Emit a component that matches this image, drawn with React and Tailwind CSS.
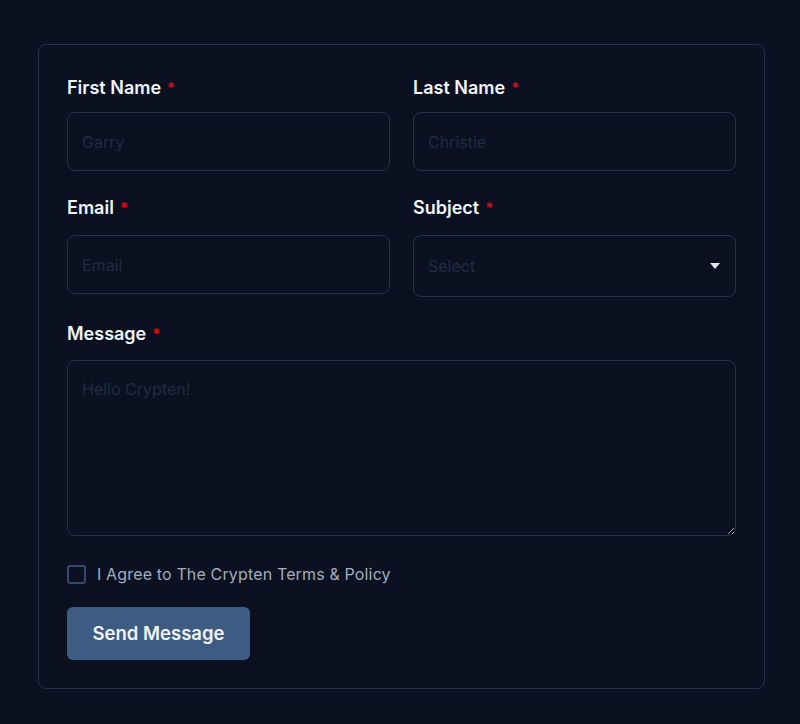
import { useState } from "react";

function Label({ children }) {
  return (
    <label className="flex items-start text-[18px] leading-6 font-semibold text-[#f1f5f9] font-['Inter',sans-serif]">
      {children}
      <span className="ml-[6px] mt-[4px] text-[15px] leading-4 text-[#e50914]">*</span>
    </label>
  );
}

const fieldCls =
  "w-full rounded-lg border border-[#2b3049] bg-transparent px-[14px] text-[16px] placeholder:text-[#1f2d42] outline-none font-['Inter',sans-serif]";

export default function App() {
  const [agree, setAgree] = useState(false);

  return (
    <div className="min-h-[724px] bg-[#0b1120] pl-[38px] pt-[44px]">
      <form className="w-[727px] h-[645px] rounded-lg border border-[#2b3049] px-[28px] pt-[31px]">
        <div className="grid grid-cols-2 gap-x-[23px] gap-y-[25px]">
          <div>
            <Label>First Name</Label>
            <input className={`${fieldCls} mt-[12px] h-[59px] text-[#cbd5e1]`} placeholder="Garry" />
          </div>
          <div>
            <Label>Last Name</Label>
            <input className={`${fieldCls} mt-[12px] h-[59px] text-[#cbd5e1]`} placeholder="Christie" />
          </div>
          <div>
            <Label>Email</Label>
            <input className={`${fieldCls} mt-[15px] h-[59px] text-[#cbd5e1]`} placeholder="Email" />
          </div>
          <div>
            <Label>Subject</Label>
            <div className="relative mt-[15px]">
              <select
                defaultValue=""
                className={`${fieldCls} h-[62px] appearance-none text-[#1f2d42]`}
              >
                <option value="" disabled>
                  Select
                </option>
                <option>General</option>
                <option>Support</option>
              </select>
              <svg
                className="pointer-events-none absolute right-[16px] top-[28px]"
                width="10"
                height="6"
                viewBox="0 0 10 6"
              >
                <path d="M0 0h10L5 6z" fill="#e5e7eb" />
              </svg>
            </div>
          </div>
          <div className="col-span-2">
            <Label>Message</Label>
            <textarea
              className={`${fieldCls} mt-[14px] block h-[176px] pt-4 leading-6 text-[#cbd5e1]`}
              placeholder="Hello Crypten!"
            />
          </div>
        </div>

        <label className="mt-[26px] flex items-center gap-[11px] cursor-pointer">
          <input
            type="checkbox"
            checked={agree}
            onChange={(e) => setAgree(e.target.checked)}
            className="h-[19px] w-[19px] appearance-none rounded-[3px] border-2 border-[#34496b] bg-transparent"
          />
          <span className="text-[16px] leading-6 tracking-[0.15px] text-[#a3adbf] font-['Inter',sans-serif]">
            I Agree to The Crypten Terms &amp; Policy
          </span>
        </label>

        <button
          type="button"
          className="mt-[21px] h-[53px] w-[183px] rounded-md bg-[#3e5c83] text-[18.5px] font-semibold text-[#f1f5f9] font-['Inter',sans-serif]"
        >
          Send Message
        </button>
      </form>
    </div>
  );
}
